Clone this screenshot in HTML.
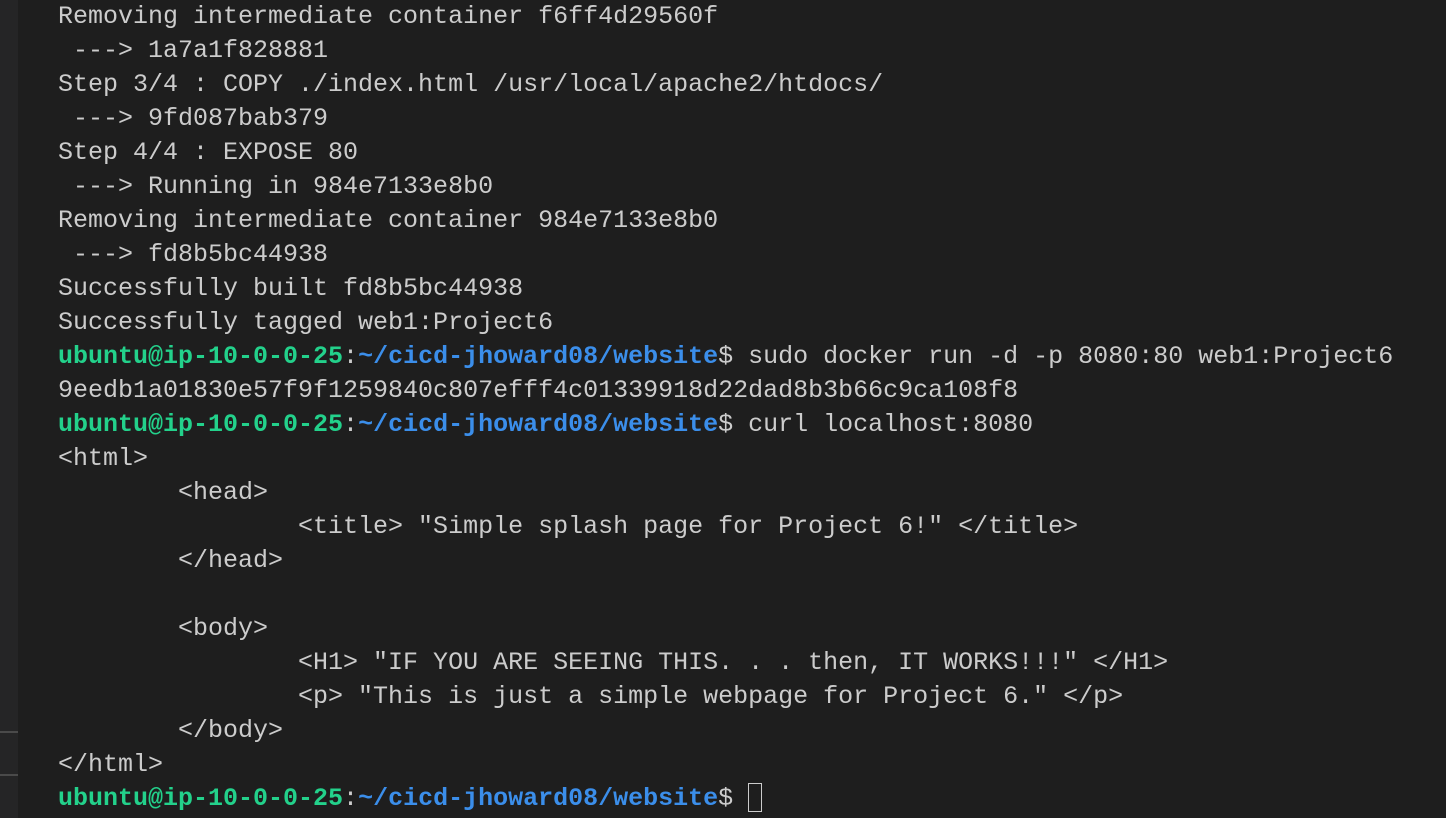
<!DOCTYPE html>
<html><head><meta charset="utf-8"><style>
html,body{margin:0;padding:0;background:#1e1e1e;width:1446px;height:818px;overflow:hidden}
.strip{position:absolute;left:0;top:0;width:18px;height:818px;background:#252526}
.l1{position:absolute;left:0;width:18px;height:2px;background:#4a4a4a}
pre{position:absolute;left:58px;top:0;margin:0;font-family:"Liberation Mono",monospace;font-size:25px;line-height:34px;color:#cccccc;white-space:pre}
.g{color:#23d18b;font-weight:bold}.b{color:#3b8eea;font-weight:bold}
.cur{display:inline-block;width:14px;height:29px;border:1px solid #cccccc;vertical-align:-7px;box-sizing:border-box}
</style></head><body>
<div class="strip"></div><div class="l1" style="top:731px"></div><div class="l1" style="top:774px"></div>
<pre>Removing intermediate container f6ff4d29560f
 ---&gt; 1a7a1f828881
Step 3/4 : COPY ./index.html /usr/local/apache2/htdocs/
 ---&gt; 9fd087bab379
Step 4/4 : EXPOSE 80
 ---&gt; Running in 984e7133e8b0
Removing intermediate container 984e7133e8b0
 ---&gt; fd8b5bc44938
Successfully built fd8b5bc44938
Successfully tagged web1:Project6
<span class="g">ubuntu@ip-10-0-0-25</span>:<span class="b">~/cicd-jhoward08/website</span>$ sudo docker run -d -p 8080:80 web1:Project6
9eedb1a01830e57f9f1259840c807efff4c01339918d22dad8b3b66c9ca108f8
<span class="g">ubuntu@ip-10-0-0-25</span>:<span class="b">~/cicd-jhoward08/website</span>$ curl localhost:8080
&lt;html&gt;
        &lt;head&gt;
                &lt;title&gt; "Simple splash page for Project 6!" &lt;/title&gt;
        &lt;/head&gt;

        &lt;body&gt;
                &lt;H1&gt; "IF YOU ARE SEEING THIS. . . then, IT WORKS!!!" &lt;/H1&gt;
                &lt;p&gt; "This is just a simple webpage for Project 6." &lt;/p&gt;
        &lt;/body&gt;
&lt;/html&gt;
<span class="g">ubuntu@ip-10-0-0-25</span>:<span class="b">~/cicd-jhoward08/website</span>$ <span class="cur"></span></pre>
</body></html>
